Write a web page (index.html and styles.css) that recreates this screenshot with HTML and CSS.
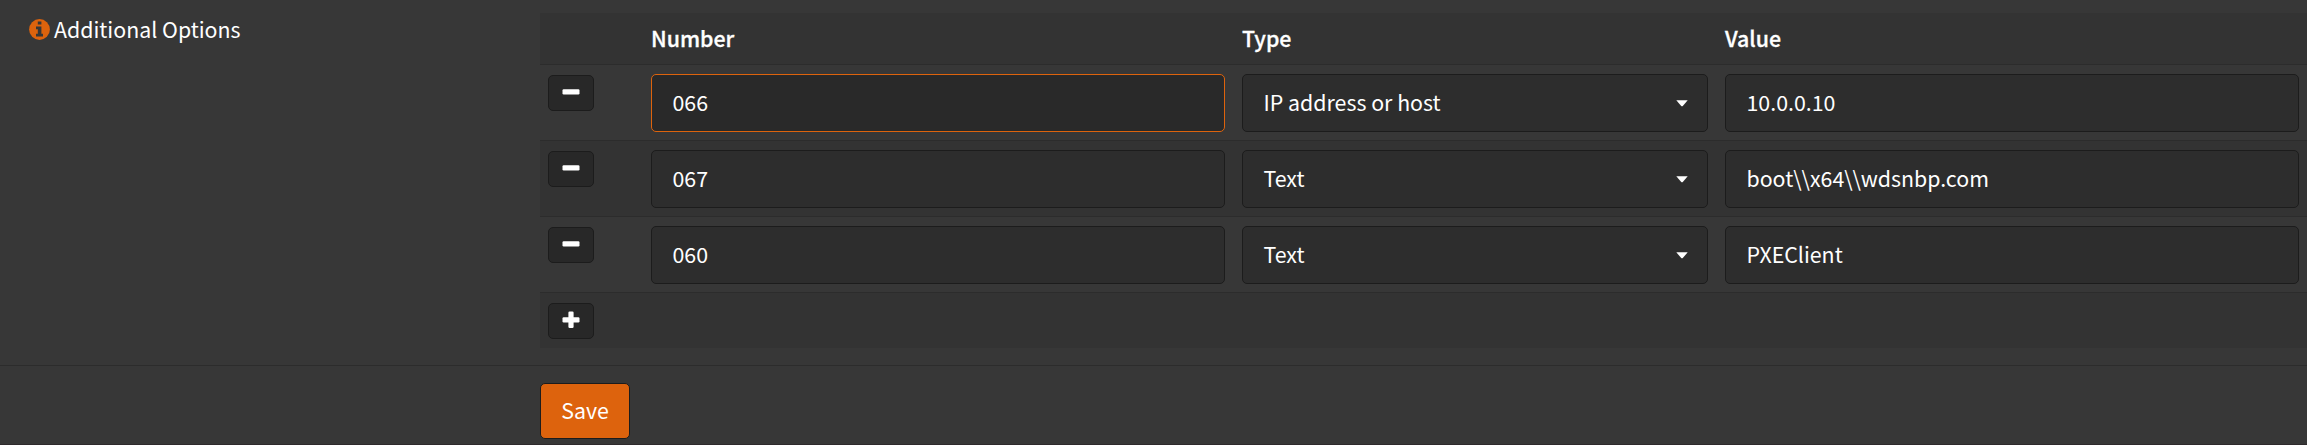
FILE: index.html
```html
<!DOCTYPE html>
<html lang="en">
<head>
<meta charset="utf-8">
<title>Additional Options</title>
<link rel="stylesheet" href="styles.css">
</head>
<body>
<main class="form">
  <section class="form-row">
    <div class="label">
      <svg class="info" viewBox="0 0 21 21"><circle cx="10.5" cy="10.5" r="10.4" fill="#dd630d"/><path fill="#373737" d="M8.8 2.6h3.6v3H8.8zM7 7.6h5.4v7.2H14v2.6H7v-2.6h1.8v-4.6H7z"/></svg>
      <span>Additional Options</span>
    </div>
    <div class="table">
      <div class="row head">
        <span></span><span>Number</span><span>Type</span><span>Value</span>
      </div>
      <div class="row">
        <button class="btn" aria-label="Remove"><svg viewBox="0 0 18 18"><rect x="0.5" y="6.2" width="17" height="5.2" rx="1.2"/></svg></button>
        <div class="field focused">066</div>
        <div class="field select">IP address or host<svg class="caret" viewBox="0 0 12 7"><path d="M.3.3h11.4L7 5.8q-1 1-2 0z"/></svg></div>
        <div class="field">10.0.0.10</div>
      </div>
      <div class="row shaded">
        <button class="btn" aria-label="Remove"><svg viewBox="0 0 18 18"><rect x="0.5" y="6.2" width="17" height="5.2" rx="1.2"/></svg></button>
        <div class="field">067</div>
        <div class="field select">Text<svg class="caret" viewBox="0 0 12 7"><path d="M.3.3h11.4L7 5.8q-1 1-2 0z"/></svg></div>
        <div class="field">boot\\x64\\wdsnbp.com</div>
      </div>
      <div class="row">
        <button class="btn" aria-label="Remove"><svg viewBox="0 0 18 18"><rect x="0.5" y="6.2" width="17" height="5.2" rx="1.2"/></svg></button>
        <div class="field">060</div>
        <div class="field select">Text<svg class="caret" viewBox="0 0 12 7"><path d="M.3.3h11.4L7 5.8q-1 1-2 0z"/></svg></div>
        <div class="field">PXEClient</div>
      </div>
      <div class="row shaded last">
        <button class="btn" aria-label="Add"><svg viewBox="0 0 18 18"><rect x="0.5" y="6.2" width="17" height="5.2" rx="1.2"/><rect x="6.4" y="0.6" width="5.2" height="16.4" rx="1.2"/></svg></button>
      </div>
    </div>
  </section>
  <section class="actions">
    <button class="save">Save</button>
  </section>
</main>
</body>
</html>
```
FILE: styles.css
```css
* { box-sizing: border-box; }

body {
  margin: 0;
  background: #373737;
  color: #fff;
  font: 21.35px/32px "Noto Sans CJK SC", "Noto Sans", sans-serif;
}

.form {
  height: 445px;
  overflow: hidden;
  border-bottom: 1px solid #2e2a2c;
}

.form-row {
  display: grid;
  grid-template-columns: 540px 1fr;
  height: 365px;
  padding-top: 13px;
}

.label {
  display: flex;
  align-items: center;
  gap: 4px;
  height: 32px;
  padding-left: 29px;
}

.info {
  width: 21px;
  height: 21px;
}

.row {
  display: grid;
  grid-template-columns: 86px 574px 466px 574px;
  column-gap: 17px;
  align-items: start;
  height: 76px;
  padding: 9px 8px 0;
  border-top: 1px solid #2c2c2c;
}

.head {
  height: 51px;
  padding-top: 9px;
  border-top: 0;
  background: #333;
  font-weight: 500;
  -webkit-text-stroke: 0.3px #fff;
}

.shaded { background: #333; }

.last { height: 56px; }

.btn {
  display: flex;
  align-items: flex-start;
  justify-content: center;
  width: 46px;
  height: 36px;
  margin: 1px 0 0;
  padding: 7px 0 0;
  border: 1px solid #1c1c1c;
  border-radius: 5px;
  background: #282828;
}

.btn svg {
  width: 18px;
  height: 18px;
  fill: #fff;
}

.field {
  display: flex;
  align-items: center;
  justify-content: space-between;
  height: 58px;
  padding: 0 19px 2px 20.5px;
  border: 1px solid #1c1c1c;
  border-radius: 5px;
  background: #2d2d2d;
}

.focused {
  border-color: #dd630d;
  background: #292929;
}

.caret {
  width: 12px;
  height: 7px;
  margin-top: 2px;
  fill: #fff;
}

.actions {
  height: 80px;
  padding: 17px 0 0 540px;
  border-top: 1px solid #2c2c2c;
}

.save {
  width: 90px;
  height: 56px;
  padding: 0 0 2px;
  border: 1px solid #1c1c1c;
  border-radius: 5px;
  background: #dd630d;
  color: #fff;
  font: inherit;
}
```
